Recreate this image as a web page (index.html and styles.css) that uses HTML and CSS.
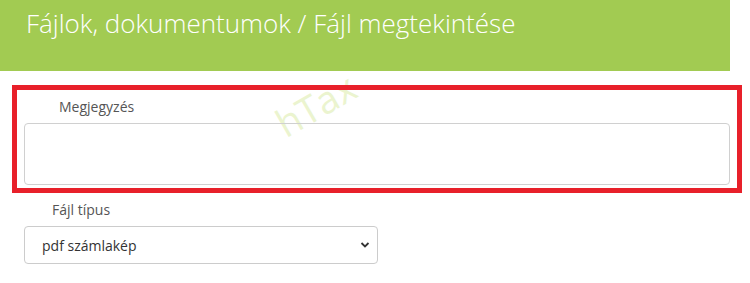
FILE: index.html
```html
<!DOCTYPE html>
<html lang="hu">
<head>
<meta charset="utf-8">
<link rel="stylesheet" href="styles.css">
</head>
<body>
<div class="page">
  <div class="watermark">hTax</div>
  <header class="header"><h1 class="title">Fájlok, dokumentumok / Fájl megtekintése</h1></header>
  <div class="highlight">
    <label class="label label-note">Megjegyzés</label>
    <textarea class="textarea"></textarea>
  </div>
  <div class="field">
    <label class="label">Fájl típus</label>
    <div class="select">
      <span class="select-value">pdf számlakép</span>
      <svg class="chev" width="10" height="8" viewBox="0 0 10 8"><path d="M1.5 2 L5 5.5 L8.5 2" fill="none" stroke="#333" stroke-width="1.8"/></svg>
    </div>
  </div>
</div>
</body>
</html>
```

FILE: styles.css
```css
html, body { margin: 0; padding: 0; background: #fff; }
body { font-family: "Open Sans", "Liberation Sans", sans-serif; width: 750px; height: 283px; overflow: hidden; }
.page { position: relative; }
.header {
  position: relative; z-index: 2;
  width: 730px; height: 71px; box-sizing: border-box;
  background: #a2cb52; padding: 6px 0 0 26px;
}
.title { margin: 0; font-weight: 300; font-size: 26px; color: #fff; line-height: 34px; }
.watermark {
  position: absolute; z-index: 0; left: 288px; top: 104px;
  font-size: 38px; line-height: 38px; color: #ebf4cf;
  transform: rotate(-30deg); transform-origin: 0 100%;
  font-family: "Open Sans", sans-serif; white-space: nowrap;
}
.highlight {
  position: relative; z-index: 1;
  margin: 14px 0 0 12px; width: 730px; box-sizing: border-box;
  border: 5px solid #e8202a; padding: 7px 8px 3px 7px;
  display: flex; flex-direction: column;
}
.label { display: block; font-size: 14px; color: #555; padding-left: 35px; line-height: 20px; }
.label-note { margin-bottom: 6px; }
.textarea {
  display: block; width: 706px; height: 62px; box-sizing: border-box; margin: 0;
  border: 1px solid #d0d0d0; border-radius: 4px; resize: none; background: transparent;
}
.field { padding: 7px 0 0 24px; }
.field .label { padding-left: 28px; margin-bottom: 6px; }
.select {
  width: 354px; height: 38px; box-sizing: border-box;
  border: 1px solid #ccc; border-radius: 4px;
  display: flex; align-items: center; justify-content: space-between;
  padding: 0 7px 0 17px; font-size: 14px; color: #333;
}
```
